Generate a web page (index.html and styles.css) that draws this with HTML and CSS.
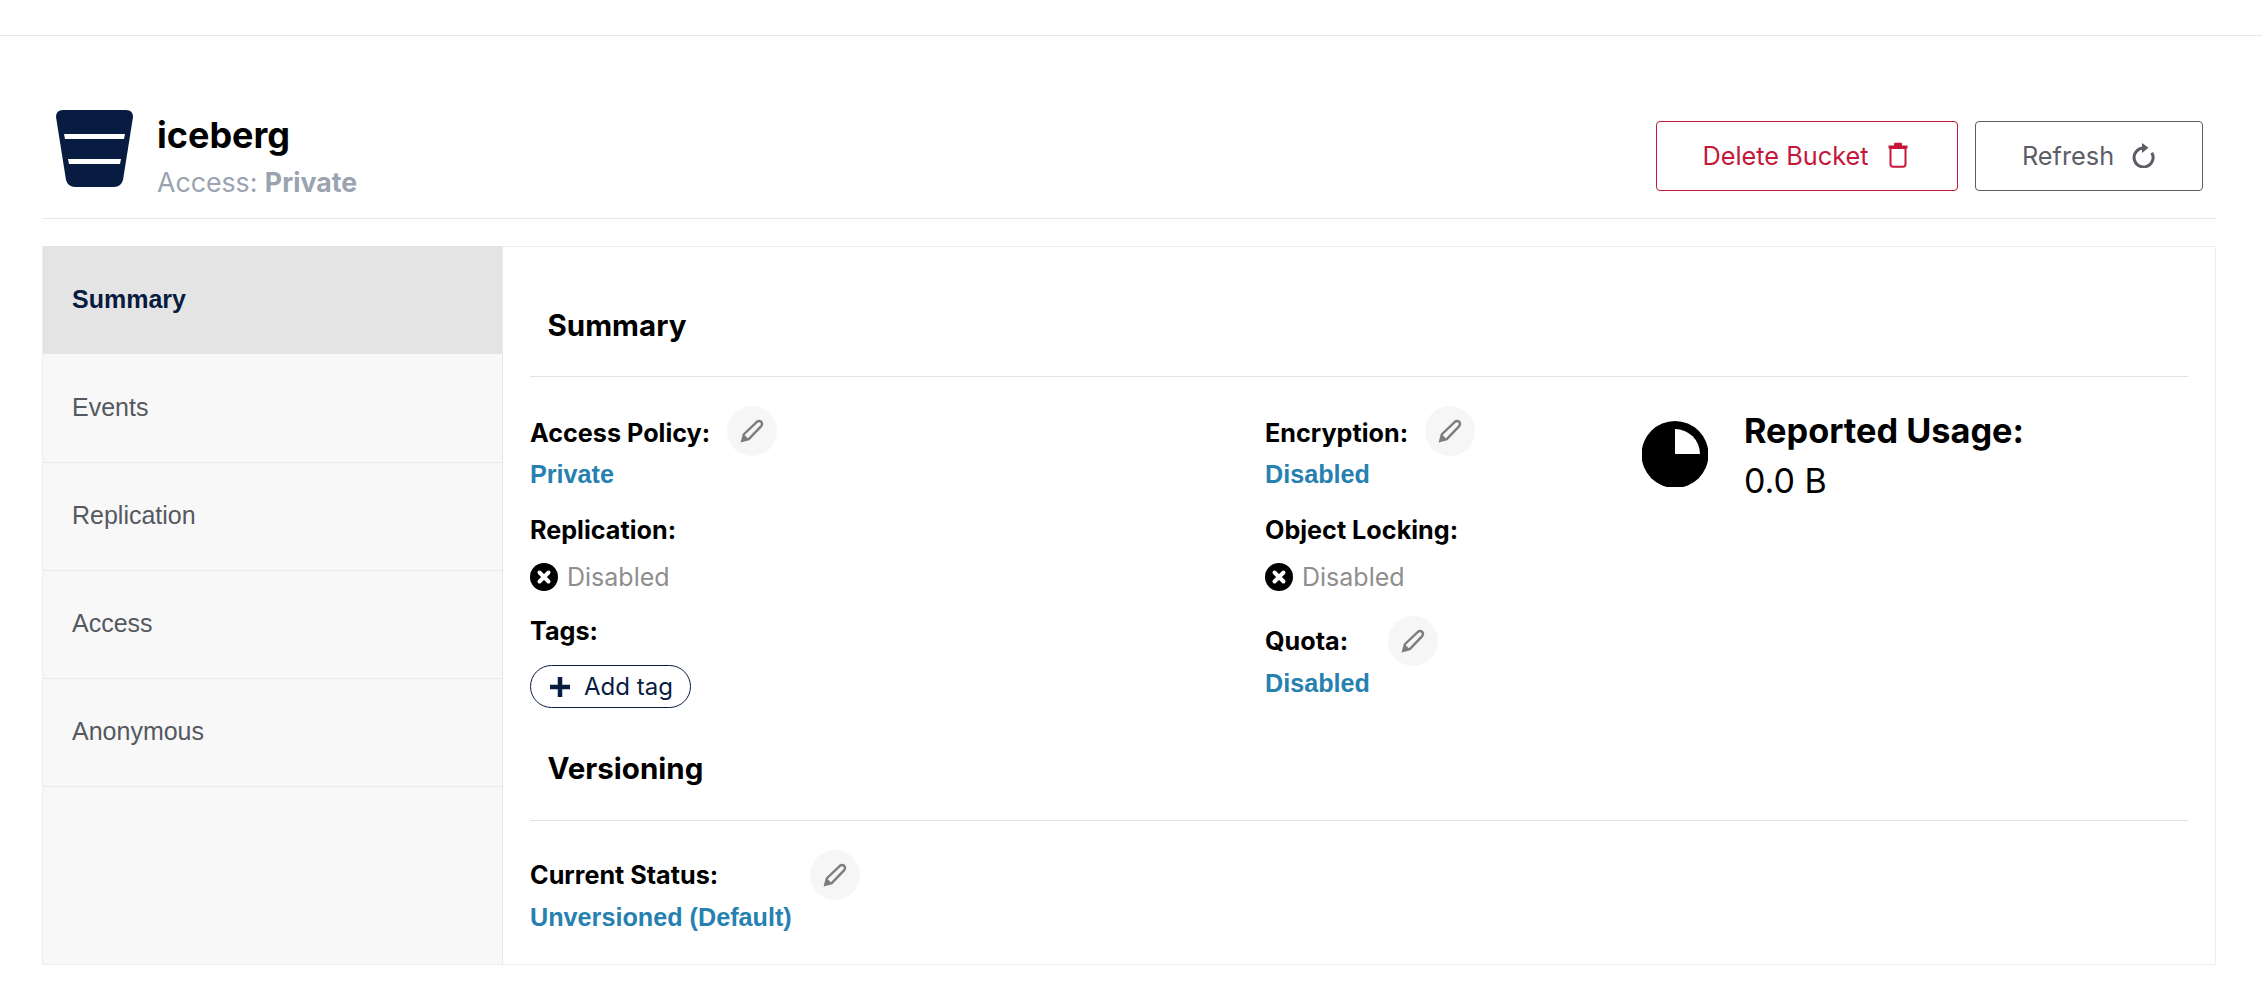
FILE: index.html
```html
<!DOCTYPE html>
<html lang="en">
<head>
<meta charset="utf-8">
<title>iceberg</title>
<link rel="stylesheet" href="styles.css">
</head>
<body>
<div class="topbar"></div>
<main class="page">
  <header class="head">
    <div class="identity">
      <svg class="bucket" viewBox="0 0 77 77"><path d="M7 0H70Q77 0 77 7L67 70Q65 77 58 77H19Q12 77 10 70L0 7Q0 0 7 0Z" fill="#081c42"/><path d="M8 24H69L68 29H9ZM12 49H65L64 54H13Z" fill="#fff"/></svg>
      <div>
        <h1 class="title">iceberg</h1>
        <div class="access">Access: <b>Private</b></div>
      </div>
    </div>
    <div class="actions">
      <button class="btn danger">Delete Bucket
        <svg class="btn-icon" viewBox="0 0 20 26"><path d="M2.500 6H17.500V22Q17.500 24.800 15 24.800H5Q2.500 24.800 2.500 22Z" fill="none" stroke="currentColor" stroke-width="2"/><path d="M0.500 3.500H6V1.500Q6 0.800 7 0.800H13Q14 0.800 14 1.500V3.500H19.500V6.500H0.500Z" fill="currentColor"/></svg>
      </button>
      <button class="btn neutral">Refresh
        <svg class="btn-icon refresh" viewBox="0 0 24 26"><path d="M11.500 6A9.500 9.500 0 1 0 19.800 10.750" fill="none" stroke="currentColor" stroke-width="3"/><path d="M10 1L16.500 5.800L10 11Z" fill="currentColor"/></svg>
      </button>
    </div>
  </header>
  <section class="panel">
    <nav class="side">
      <a class="tab active">Summary</a>
      <a class="tab">Events</a>
      <a class="tab">Replication</a>
      <a class="tab">Access</a>
      <a class="tab">Anonymous</a>
    </nav>
    <div class="content">
      <h2 class="section first">Summary</h2>
      <div class="grid">
        <div class="col">
          <div class="label-row"><span class="label">Access Policy:</span><span class="edit edit-high"><svg viewBox="0 0 24 24"><use href="#pen"/></svg></span></div>
          <div class="value">Private</div>
          <div class="label plain r2">Replication:</div>
          <div class="status"><svg class="x" viewBox="0 0 28 28"><use href="#x"/></svg>Disabled</div>
          <div class="label plain r3">Tags:</div>
          <div class="tag"><svg viewBox="0 0 20 20"><path d="M10 0V20M0 10H20" stroke="#081c42" stroke-width="4.500"/></svg>Add tag</div>
        </div>
        <div class="col">
          <div class="label-row"><span class="label">Encryption:</span><span class="edit edit-high"><svg viewBox="0 0 24 24"><use href="#pen"/></svg></span></div>
          <div class="value">Disabled</div>
          <div class="label plain r2">Object Locking:</div>
          <div class="status"><svg class="x" viewBox="0 0 28 28"><use href="#x"/></svg>Disabled</div>
          <div class="label-row quota"><span class="label">Quota:</span><span class="edit"><svg viewBox="0 0 24 24"><use href="#pen"/></svg></span></div>
          <div class="value value-low">Disabled</div>
        </div>
        <div class="usage">
          <svg class="pie" viewBox="0 0 66 66"><circle cx="33" cy="33.500" r="33.500"/><path d="M33 8A25 25 0 0 1 58 33H33Z" fill="#fff"/></svg>
          <div class="usage-text">
            <div class="usage-title">Reported Usage:</div>
            <div class="usage-value">0.0 B</div>
          </div>
        </div>
      </div>
      <h2 class="section">Versioning</h2>
      <div class="label-row status-row"><span class="label">Current Status:</span><span class="edit"><svg viewBox="0 0 24 24"><use href="#pen"/></svg></span></div>
      <div class="value value-low">Unversioned (Default)</div>
    </div>
  </section>
</main>
<svg class="defs" width="0" height="0">
  <symbol id="pen" viewBox="0 0 24 24"><path d="M16.500 3.500Q18.500 2 20.500 3.500Q22 5.500 20.500 7.500L9 19.500L3 21L4.500 15Z" fill="none" stroke="currentColor" stroke-width="2.200"/><path d="M4.500 15L9 19.500L3 21Z" fill="currentColor"/></symbol>
  <symbol id="x" viewBox="0 0 28 28"><circle cx="14" cy="14" r="14" fill="#000"/><path d="M9.500 9.500L18.500 18.500M18.500 9.500L9.500 18.500" stroke="#fff" stroke-width="4" stroke-linecap="round"/></symbol>
</svg>
</body>
</html>
```
FILE: styles.css
```css
* { box-sizing: border-box; }
html, body { margin: 0; height: 100%; }
body { background: #fff; color: #000; font-family: Inter, "Liberation Sans", sans-serif; overflow: hidden; }
.topbar { height: 36px; border-bottom: 1px solid #e6e6e6; }
.page { padding: 0 46px 0 42px; }
.head { height: 183px; padding: 74px 13px 0 14px; margin-bottom: 27px; border-bottom: 1px solid #e6e6e6; display: flex; justify-content: space-between; }
.identity { display: flex; gap: 24px; }
.bucket { width: 77px; height: 77px; display: block; }
.title { margin: 3px 0 0; font-size: 36px; line-height: 44px; font-weight: 700; }
.access { font-size: 26.700px; line-height: 32px; color: #9aa3b0; margin-top: 9px; }
.access b { font-weight: 700; }
.actions { display: flex; gap: 17px; padding-top: 11px; height: 81px; }
.btn { height: 70px; padding: 0 0 2px; background: #fff; border: 1.500px solid; border-radius: 4px; font: 400 25.300px Inter, sans-serif; display: flex; align-items: center; justify-content: center; }
.danger { width: 302px; padding-right: 4px; color: #c4173a; border-color: #c4173a; gap: 19px; }
.neutral { width: 228px; color: #5b5e66; border-color: #5b5e66; gap: 18px; }
.btn-icon { width: 20px; height: 26px; }
.refresh { width: 24px; }
.panel { height: 719px; border: 1px solid #eeeeee; display: flex; border-left: 0; }
.side { width: 461px; margin-top: -1px; background: #f8f8f8; border-left: 1px solid #eeeeee; border-right: 1px solid #e8e8e8; flex: none; }
.tab { display: flex; align-items: center; height: 108px; padding: 0 0 2px 29px; font: 400 25px "Liberation Sans", sans-serif; color: #55595f; border-bottom: 1px solid #eaeaea; }
.active { background: #e4e4e4; color: #081c42; font-weight: 700; border-bottom: 0; margin-bottom: 1px; padding-bottom: 1px; }
.content { flex: 1; padding: 0 27px; }
.section { margin: 0 0 29px; height: 89px; padding: 14px 17.500px 0; font-size: 29.500px; line-height: 44px; font-weight: 700; border-bottom: 1px solid #e2e2e2; }
.section.first { margin: 48px 0 31px; height: 82px; padding-top: 8px; }
.grid { display: grid; grid-template-columns: 735px 377px 1fr; height: 324px; }
.col { min-width: 0; }
.label-row { display: flex; align-items: center; height: 50px; }
.label { font-size: 25.200px; line-height: 30px; font-weight: 700; }
.plain { display: block; }
.edit { width: 50px; height: 50px; border-radius: 50%; background: #f6f6f6; color: #7d7d7d; display: flex; align-items: center; justify-content: center; margin-left: 18px; }
.edit-high { margin: 0 0 5px 17px; }
.edit svg { width: 26px; height: 26px; }
.value { font: 700 25.200px/30px "Liberation Sans", sans-serif; color: #2781b0; margin-top: 1px; }
.value-low { margin-top: 2px; }
.r2 { margin-top: 26px; }
.status { display: flex; align-items: center; gap: 9px; height: 30px; margin-top: 17px; font-size: 25px; color: #8e8e8e; }
.x { width: 28px; height: 28px; }
.r3 { margin-top: 24px; }
.tag { display: inline-flex; align-items: center; gap: 14px; width: 161px; height: 43px; margin-top: 19px; padding-left: 19px; border: 1.500px solid #081c42; border-radius: 22px; font-size: 24px; color: #081c42; }
.tag svg { width: 20px; height: 20px; }
.quota { margin-top: 24px; }
.quota .edit { margin-left: 40px; }
.usage { display: flex; gap: 36px; }
.pie { width: 66px; height: 66px; margin-top: 13px; }
.usage-text { padding-top: 3px; }
.usage-title { font-size: 34.300px; line-height: 40px; font-weight: 700; }
.usage-value { font-size: 34px; line-height: 40px; margin-top: 10px; }
.status-row .edit { margin-left: 92px; }
.defs { position: absolute; }
```
